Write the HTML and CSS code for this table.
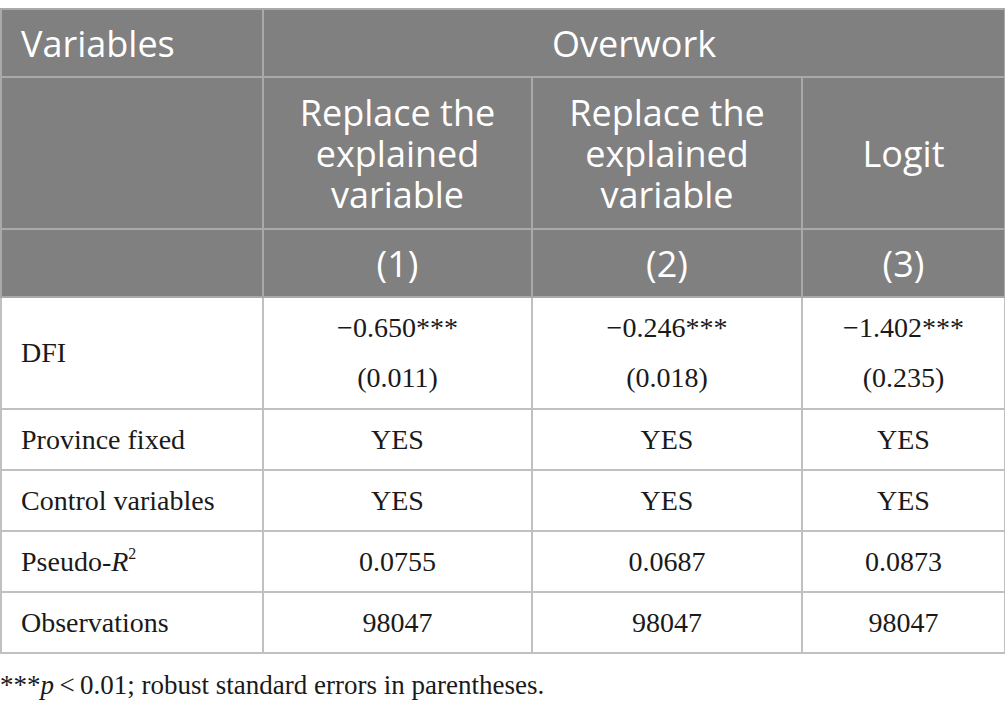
FILE: index.html
```html
<!DOCTYPE html>
<html>
<head>
<meta charset="utf-8">
<link rel="stylesheet" href="styles.css">
</head>
<body>
<table class="tbl">
  <colgroup>
    <col class="c1"><col class="c2"><col class="c3"><col class="c4">
  </colgroup>
  <thead>
    <tr class="h1">
      <th class="left">Variables</th>
      <th colspan="3">Overwork</th>
    </tr>
    <tr class="h2">
      <th></th>
      <th><div class="hl">Replace the</div><div class="hl">explained</div><div class="hl">variable</div></th>
      <th><div class="hl">Replace the</div><div class="hl">explained</div><div class="hl">variable</div></th>
      <th>Logit</th>
    </tr>
    <tr class="h3">
      <th></th>
      <th>(1)</th>
      <th>(2)</th>
      <th>(3)</th>
    </tr>
  </thead>
  <tbody>
    <tr class="r-dfi">
      <td class="left">DFI</td>
      <td><div class="ln">&minus;0.650***</div><div class="ln">(0.011)</div></td>
      <td><div class="ln">&minus;0.246***</div><div class="ln">(0.018)</div></td>
      <td><div class="ln">&minus;1.402***</div><div class="ln">(0.235)</div></td>
    </tr>
    <tr class="r">
      <td class="left">Province fixed</td>
      <td>YES</td><td>YES</td><td>YES</td>
    </tr>
    <tr class="r">
      <td class="left">Control variables</td>
      <td>YES</td><td>YES</td><td>YES</td>
    </tr>
    <tr class="r">
      <td class="left">Pseudo-<i>R</i><sup>2</sup></td>
      <td>0.0755</td><td>0.0687</td><td>0.0873</td>
    </tr>
    <tr class="r">
      <td class="left">Observations</td>
      <td>98047</td><td>98047</td><td>98047</td>
    </tr>
  </tbody>
</table>
<p class="note">***<i>p</i>&thinsp;&lt;&thinsp;0.01; robust standard errors in parentheses.</p>
</body>
</html>
```

FILE: styles.css
```css
html, body {
  margin: 0;
  padding: 0;
  background: #ffffff;
}
body {
  padding-top: 8px;
}
.tbl {
  border-collapse: collapse;
  table-layout: fixed;
  width: 1004px;
}
.c1 { width: 262px; }
.c2 { width: 269px; }
.c3 { width: 270px; }
.c4 { width: 203px; }
.tbl th, .tbl td {
  border: 2px solid #c0c0c0;
  text-align: center;
  vertical-align: middle;
  padding: 0 6px;
}
.tbl th {
  background: #808080;
  color: #ffffff;
  font-family: "Open Sans", "Noto Sans", sans-serif;
  font-weight: 400;
  font-size: 36px;
  line-height: 41px;
  border-color: #a9a9a9;
}
.hl {
  height: 41px;
  line-height: 41px;
}
.tbl th.left, .tbl td.left {
  text-align: left;
  padding-left: 19px;
}
.h1 th { height: 66px; }
.h2 th { height: 150px; }
.h3 th { height: 66px; }
.tbl td {
  font-family: "Liberation Serif", "Times New Roman", serif;
  font-size: 28px;
  color: #1a1a1a;
  line-height: 30px;
}
.r-dfi td { height: 110px; }
.r-dfi .ln { line-height: 50px; }
.r td { height: 59px; }
sup {
  font-size: 16px;
  line-height: 0;
  vertical-align: 12px;
}
.note {
  margin: 16px 0 0 0;
  font-family: "Liberation Serif", "Times New Roman", serif;
  font-size: 27px;
  color: #1a1a1a;
}
```
